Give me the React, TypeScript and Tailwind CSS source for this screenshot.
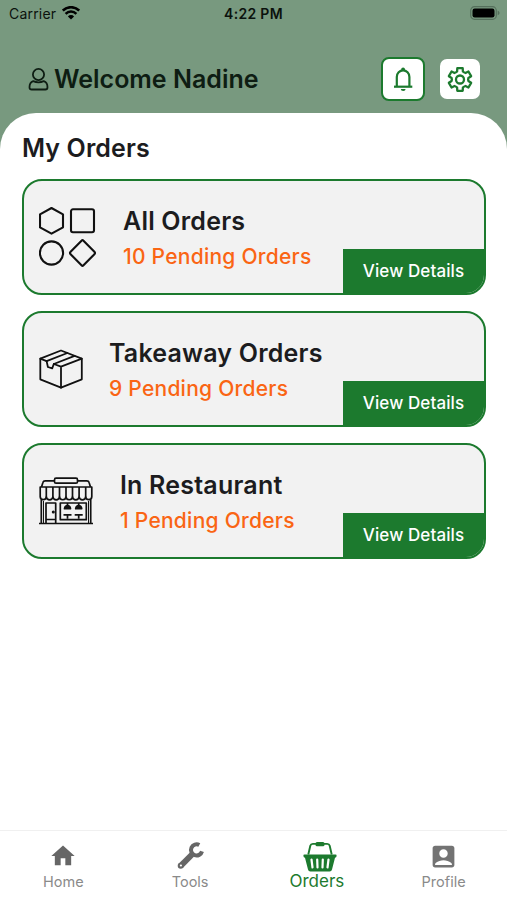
import type { ReactNode } from "react";
import { MdHome, MdAccountBox } from "react-icons/md";

const UserIcon = () => (
  <svg width="22" height="26" viewBox="0 0 22 26" fill="none" stroke="#0e1d13" strokeWidth="1.8">
    <circle cx="11.500" cy="8.500" r="5.600" />
    <path d="M6.200 15.200q5.300 2.200 10.600 0c2.500.8 3.700 3.500 3.700 6 0 1.700-.8 2.300-2.200 2.300H4.700c-1.400 0-2.200-.6-2.200-2.300 0-2.500 1.200-5.200 3.700-6z" strokeLinejoin="round" />
  </svg>
);

const WifiIcon = () => (
  <svg width="18" height="14" viewBox="0 0 18 14" fill="none" stroke="#000" strokeWidth="2.5">
    <path d="M.8 4.500a11.700 11.700 0 0 1 16.400 0" />
    <path d="M3.600 7.800a7.700 7.700 0 0 1 10.800 0" />
    <path d="M9 13.600 5.900 10.400a4.400 4.400 0 0 1 6.200 0z" fill="#000" stroke="none" />
  </svg>
);

const BatteryIcon = () => (
  <svg width="31" height="15" viewBox="0 0 31 15">
    <rect x=".7" y=".7" width="25.600" height="12.600" rx="3.800" fill="none" stroke="#55705c" strokeWidth="1.200" />
    <rect x="2.500" y="2.500" width="22" height="9" rx="2.200" fill="#000" />
    <path d="M27.700 4.800c1.200.4 1.800 1.200 1.800 2.200s-.6 1.800-1.800 2.200z" fill="#55705c" />
  </svg>
);

const BellIcon = () => (
  <svg width="20" height="26" viewBox="0 0 20 26" fill="none" stroke="#1c7a2e" strokeWidth="2.2">
    <path d="M3.800 20.400V11a6.300 6.600 0 0 1 12.600 0v9.400" />
    <path d="M1 20.700h18.300" />
    <path d="M8.200 5V3.300a1.900 1.900 0 0 1 3.800 0V5zM7.800 23h4.800a2.400 2 0 0 1-4.800 0z" fill="#1c7a2e" stroke="none" />
  </svg>
);

const GearIcon = () => (
  <svg width="28" height="28" viewBox="-14 -14.500 28 28" fill="none" stroke="#1c7a2e" strokeWidth="2.3" strokeLinejoin="round">
    <path d="M-2.700-11.300H2.700L2.900-8Q4-6.900 5.480-6.510L8.440-7.990 11.140-3.310 8.380-1.490Q7.900 0 8.380 1.490L11.140 3.310 8.440 7.990 5.480 6.510Q4 6.900 2.900 8L2.700 11.300H-2.700L-2.900 8Q-4 6.900-5.480 6.510L-8.440 7.990-11.140 3.310-8.380 1.490Q-7.900 0-8.380-1.490L-11.140-3.310-8.440-7.990-5.480-6.510Q-4-6.900-2.900-8z" />
    <circle cx="0" cy="0" r="4" />
  </svg>
);

const ShapesIcon = () => (
  <svg width="58" height="62" viewBox="0 0 58 62" fill="none" stroke="#111" strokeWidth="2.1" strokeLinejoin="round">
    <path d="M12.500 2 24 8.300v13L12.500 27.600 1 21.300v-13z" />
    <rect x="32" y="3.300" width="23" height="23" rx="2" />
    <circle cx="12.500" cy="47" r="11.600" />
    <path d="M42.500 34.700q1-1 2 0l10.900 11.100q1.200 1.200 0 2.400L44.500 59.300q-1 1-2 0L31.600 48.200q-1.200-1.200 0-2.400z" />
  </svg>
);

const BoxIcon = () => (
  <svg width="45" height="40" viewBox="0 0 45 40" fill="none" stroke="#111" strokeWidth="1.800" strokeLinejoin="round" strokeLinecap="round">
    <path d="M22 1.500 42.800 9.700V30.300L22 38.700 1.300 30.300V9.700z" />
    <path d="M1.300 9.700 7.600 12.100M14.800 15 22 17.700 42.800 9.700M22 17.700v21" />
    <path d="M7.600 12.100 28.400 4M14.800 15 35.600 6.900" />
    <path d="M7.600 12.100 8.900 18l4.300 1.400 1.600-4.400" />
  </svg>
);

const StoreIcon = () => (
  <svg width="54" height="48" viewBox="0 0 54 48" fill="none" stroke="#111" strokeWidth="1.700" strokeLinejoin="round">
    <rect x="15.500" y="1.200" width="23" height="5" rx="1.500" />
    <path d="M15.500 3.800H6.200q-1.800 0-2.200 1.500L2.500 10M38.500 3.800h9.300q1.800 0 2.200 1.500l1.500 4.700" />
    <path d="M1.200 10h51.600v9.500a3.050 3.050 0 0 1-6.100 0 3.300 3.300 0 0 1-6.600 0 3.300 3.300 0 0 1-6.600 0 3.250 3.250 0 0 1-6.500 0 3.250 3.250 0 0 1-6.500 0 3.300 3.300 0 0 1-6.600 0 3.300 3.300 0 0 1-6.600 0 3.050 3.050 0 0 1-6.100 0z" />
    <path d="M7.300 10v9.500M13.900 10v9.500M20.500 10v9.500M27 10v9.500M33.500 10v9.500M40.100 10v9.500M46.700 10v9.500" />
    <path d="M2.300 22.500V46M51.700 22.500V46M0 46.500h54" />
    <path d="M4.500 24v22M49.500 24v22" strokeWidth="1" />
    <path d="M7 46V26H16.700V46M7 42.500h9.700" />
    <rect x="21.300" y="26" width="26" height="16.700" />
    <path d="M28.500 26v3M39.700 26v3" />
    <path d="M25.500 31.700q.5-3 3-3t3 3zM36.700 31.700q.5-3 3-3t3 3z" fill="#111" />
    <path d="M24.500 37.800h8M35.700 37.800h8M28.500 37.800v4M39.700 37.800v4" />
    <circle cx="14.300" cy="35" r=".7" fill="#111" />
  </svg>
);

const WrenchIcon = () => (
  <svg width="30" height="30" viewBox="0 0 30 30" fill="none">
    <path d="M5.700 24.800 17 13.500" stroke="#666" strokeWidth="6" />
    <circle cx="5.700" cy="24.800" r="3" fill="#666" />
    <path d="M24.300 4A5.600 5.600 0 1 0 27 10.400" stroke="#666" strokeWidth="4" />
    <circle cx="5.900" cy="24.500" r="1.100" fill="#fff" />
  </svg>
);

const BasketIcon = () => (
  <svg className="mt-px ml-[6px]" width="34" height="32" viewBox="0 0 34 32" fill="none" stroke="#1c7a2e">
    <path d="M5.300 13.500 7.300 4.800q.5-1.900 2.500-1.900h14.400q2 0 2.500 1.900l2 8.700" strokeWidth="1.900" />
    <rect x="12.500" y="1" width="9" height="4.200" rx="1.500" fill="#1c7a2e" stroke="none" />
    <path d="M1.500 13.500h31q1.300 0 1.100 1.400-.2 1.600-1.600 1.800L29 28.600q-.4 2-2.400 2H7.400q-2 0-2.400-2L2 16.700Q.6 16.500.4 14.900.2 13.500 1.500 13.500z" fill="#1c7a2e" stroke="none" />
    <path d="m8.500 18.500 1 8M14.200 18.500l.3 8M19.800 18.500l-.3 8M25.500 18.500l-1 8" stroke="#fff" strokeWidth="2.200" strokeLinecap="round" />
  </svg>
);

type OrderCardProps = { icon: ReactNode; title: string; pending: string; gap: string };

const OrderCard = ({ icon, title, pending, gap }: OrderCardProps) => (
  <div className={`relative flex h-[116px] items-center overflow-hidden rounded-[20px] border-2 border-[#1c7a2e] bg-[#f2f2f2] pl-[15px] ${gap}`}>
    {icon}
    <div className="pt-[3px] whitespace-nowrap">
      <h3 className="text-[25px] leading-[36px] font-semibold tracking-[0.2px] text-[#1c1c1e]">{title}</h3>
      <p className="text-[21px] leading-[36px] font-medium tracking-[0.25px] text-[#fa6514]">{pending}</p>
    </div>
    <button className="absolute right-0 bottom-0 h-[44px] w-[141px] bg-[#1c7a2e] pt-px text-[17px] font-medium tracking-[0.1px] text-white">
      View Details
    </button>
  </div>
);

const orders = [
  { icon: <ShapesIcon />, title: "All Orders", pending: "10 Pending Orders", gap: "gap-[26px]" },
  { icon: <BoxIcon />, title: "Takeaway Orders", pending: "9 Pending Orders", gap: "gap-[25px]" },
  { icon: <StoreIcon />, title: "In Restaurant", pending: "1 Pending Orders", gap: "gap-[27px]" },
];

const tabs = [
  { icon: <MdHome size={28} color="#666" />, label: "Home", className: "text-[14.5px] text-[#8a8a8a]" },
  { icon: <WrenchIcon />, label: "Tools", className: "text-[14.5px] text-[#8a8a8a]" },
  { icon: <BasketIcon />, label: "Orders", className: "text-[17px] text-[#1c7a2e]" },
  { icon: <MdAccountBox size={29} color="#737373" />, label: "Profile", className: "text-[14.5px] text-[#8a8a8a]" },
];

export default function App() {
  return (
    <div className="flex h-[900px] w-[507px] flex-col overflow-hidden bg-[#78997f] font-['Inter',sans-serif]">
      <div className="grid h-7 shrink-0 grid-cols-3 items-center pr-[6px] pb-[2px] pl-[9px] text-[14px] text-[#0b120d]">
        <div className="flex items-center gap-[6px]">
          <span className="tracking-[0.2px]">Carrier</span>
          <WifiIcon />
        </div>
        <span className="pr-[3px] text-center font-semibold tracking-[0.3px]">4:22 PM</span>
        <div className="flex justify-end">
          <BatteryIcon />
        </div>
      </div>

      <header className="flex h-[85px] shrink-0 items-center pt-[17px] pr-[27px] pl-[27px]">
        <UserIcon />
        <h1 className="ml-[5px] flex-1 pt-[2px] text-[25px] font-semibold whitespace-nowrap text-[#0e1d13]">Welcome Nadine</h1>
        <button className="mr-[15px] flex size-[44px] items-center justify-center rounded-[8px] border-2 border-[#1c7a2e] bg-white">
          <BellIcon />
        </button>
        <button className="flex size-[40px] items-center justify-center rounded-[7px] bg-white">
          <GearIcon />
        </button>
      </header>

      <main className="flex-1 rounded-t-[36px] bg-white pt-[17px] pr-[21px] pl-[22px]">
        <h2 className="h-[49px] text-[25px] leading-[37px] font-semibold tracking-[0.1px] text-[#1c1c1e]">My Orders</h2>
        <div className="flex flex-col gap-4">
          {orders.map((order) => (
            <OrderCard key={order.title} {...order} />
          ))}
        </div>
      </main>

      <nav className="grid h-[70px] shrink-0 grid-cols-4 border-t border-[#f0f0f0] bg-white">
        {tabs.map((tab) => (
          <div key={tab.label} className="flex flex-col items-center pt-[9px]">
            <div className="flex h-[32px] items-center">{tab.icon}</div>
            <span className={`leading-[19px] ${tab.className}`}>{tab.label}</span>
          </div>
        ))}
      </nav>
    </div>
  );
}
